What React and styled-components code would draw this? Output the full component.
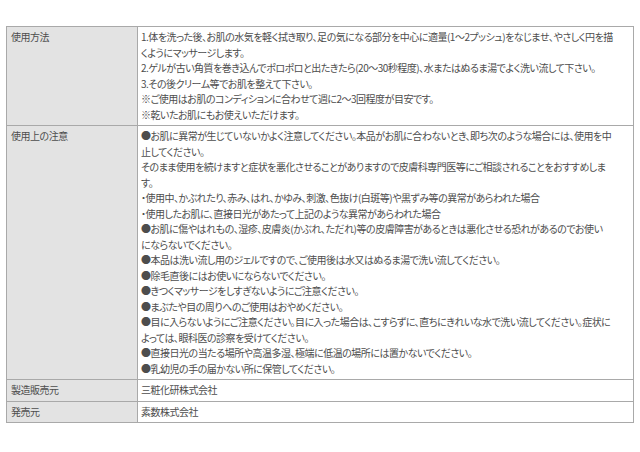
import styled, { createGlobalStyle } from 'styled-components';

const GlobalStyle = createGlobalStyle`
    html, body {
        margin: 0;
        padding: 0;
        background: #ffffff;
    }
    body {
        font-family: "Noto Sans CJK JP", "Liberation Sans", sans-serif;
        color: #4d4d4d;
    }
`

const Page = styled.div`
    width: 640px;
    height: 452px;
    padding: 26px 6px 0;
    box-sizing: border-box;
    background: #ffffff;
`

const SpecTable = styled.div`
    width: 628px;
    box-sizing: border-box;
    display: grid;
    grid-template-columns: 131px 1fr;
    border-top: 1px solid #a9a9a9;
    border-left: 1px solid #a9a9a9;
    font-size: 10px;
    line-height: 15.5px;
    letter-spacing: -0.5px;
    font-feature-settings: "palt";
`

const Label = styled.div`
    padding: 2px 5px 3px 4px;
    background: #e3e3e3;
    border-right: 1px solid #a9a9a9;
    border-bottom: 1px solid #a9a9a9;
`

const Value = styled.div`
    min-width: 0;
    overflow: hidden;
    padding: 2px 3px 3px;
    background: #ffffff;
    border-right: 1px solid #a9a9a9;
    border-bottom: 1px solid #a9a9a9;
`

const Line = styled.div`
    white-space: nowrap;
`

const rows = [
    {
        label: '使用方法',
        lines: [
            '1.体を洗った後、お肌の水気を軽く拭き取り、足の気になる部分を中心に適量(1～2プッシュ)をなじませ、やさしく円を描',
            'くようにマッサージします。',
            '2.ゲルが古い角質を巻き込んでポロポロと出たきたら(20～30秒程度)、水またはぬるま湯でよく洗い流して下さい。',
            '3.その後クリーム等でお肌を整えて下さい。',
            '※ご使用はお肌のコンディションに合わせて週に2～3回程度が目安です。',
            '※乾いたお肌にもお使えいただけます。',
        ],
    },
    {
        label: '使用上の注意',
        lines: [
            '●お肌に異常が生じていないかよく注意してください。本品がお肌に合わないとき、即ち次のような場合には、使用を中',
            '止してください。',
            'そのまま使用を続けますと症状を悪化させることがありますので皮膚科専門医等にご相談されることをおすすめしま',
            'す。',
            '・使用中、かぶれたり、赤み、はれ、かゆみ、刺激、色抜け(白斑等)や黒ずみ等の異常があらわれた場合',
            '・使用したお肌に、直接日光があたって上記のような異常があらわれた場合',
            '●お肌に傷やはれもの、湿疹、皮膚炎(かぶれ、ただれ)等の皮膚障害があるときは悪化させる恐れがあるのでお使い',
            'にならないでください。',
            '●本品は洗い流し用のジェルですので、ご使用後は水又はぬるま湯で洗い流してください。',
            '●除毛直後にはお使いにならないでください。',
            '●きつくマッサージをしすぎないようにご注意ください。',
            '●まぶたや目の周りへのご使用はおやめください。',
            '●目に入らないようにご注意ください。目に入った場合は、こすらずに、直ちにきれいな水で洗い流してください。症状に',
            'よっては、眼科医の診察を受けてください。',
            '●直接日光の当たる場所や高温多湿、極端に低温の場所には置かないでください。',
            '●乳幼児の手の届かない所に保管してください。',
        ],
    },
    { label: '製造販売元', lines: ['三粧化研株式会社'] },
    { label: '発売元', lines: ['素数株式会社'] },
];

function App() {
    return (
        <Page>
            <GlobalStyle />
            <SpecTable>
                {rows.map((row) => [
                    <Label key={row.label + '-label'}>{row.label}</Label>,
                    <Value key={row.label + '-value'}>
                        {row.lines.map((line, i) => (
                            <Line key={i}>{line}</Line>
                        ))}
                    </Value>,
                ])}
            </SpecTable>
        </Page>
    )
}

export default App;
